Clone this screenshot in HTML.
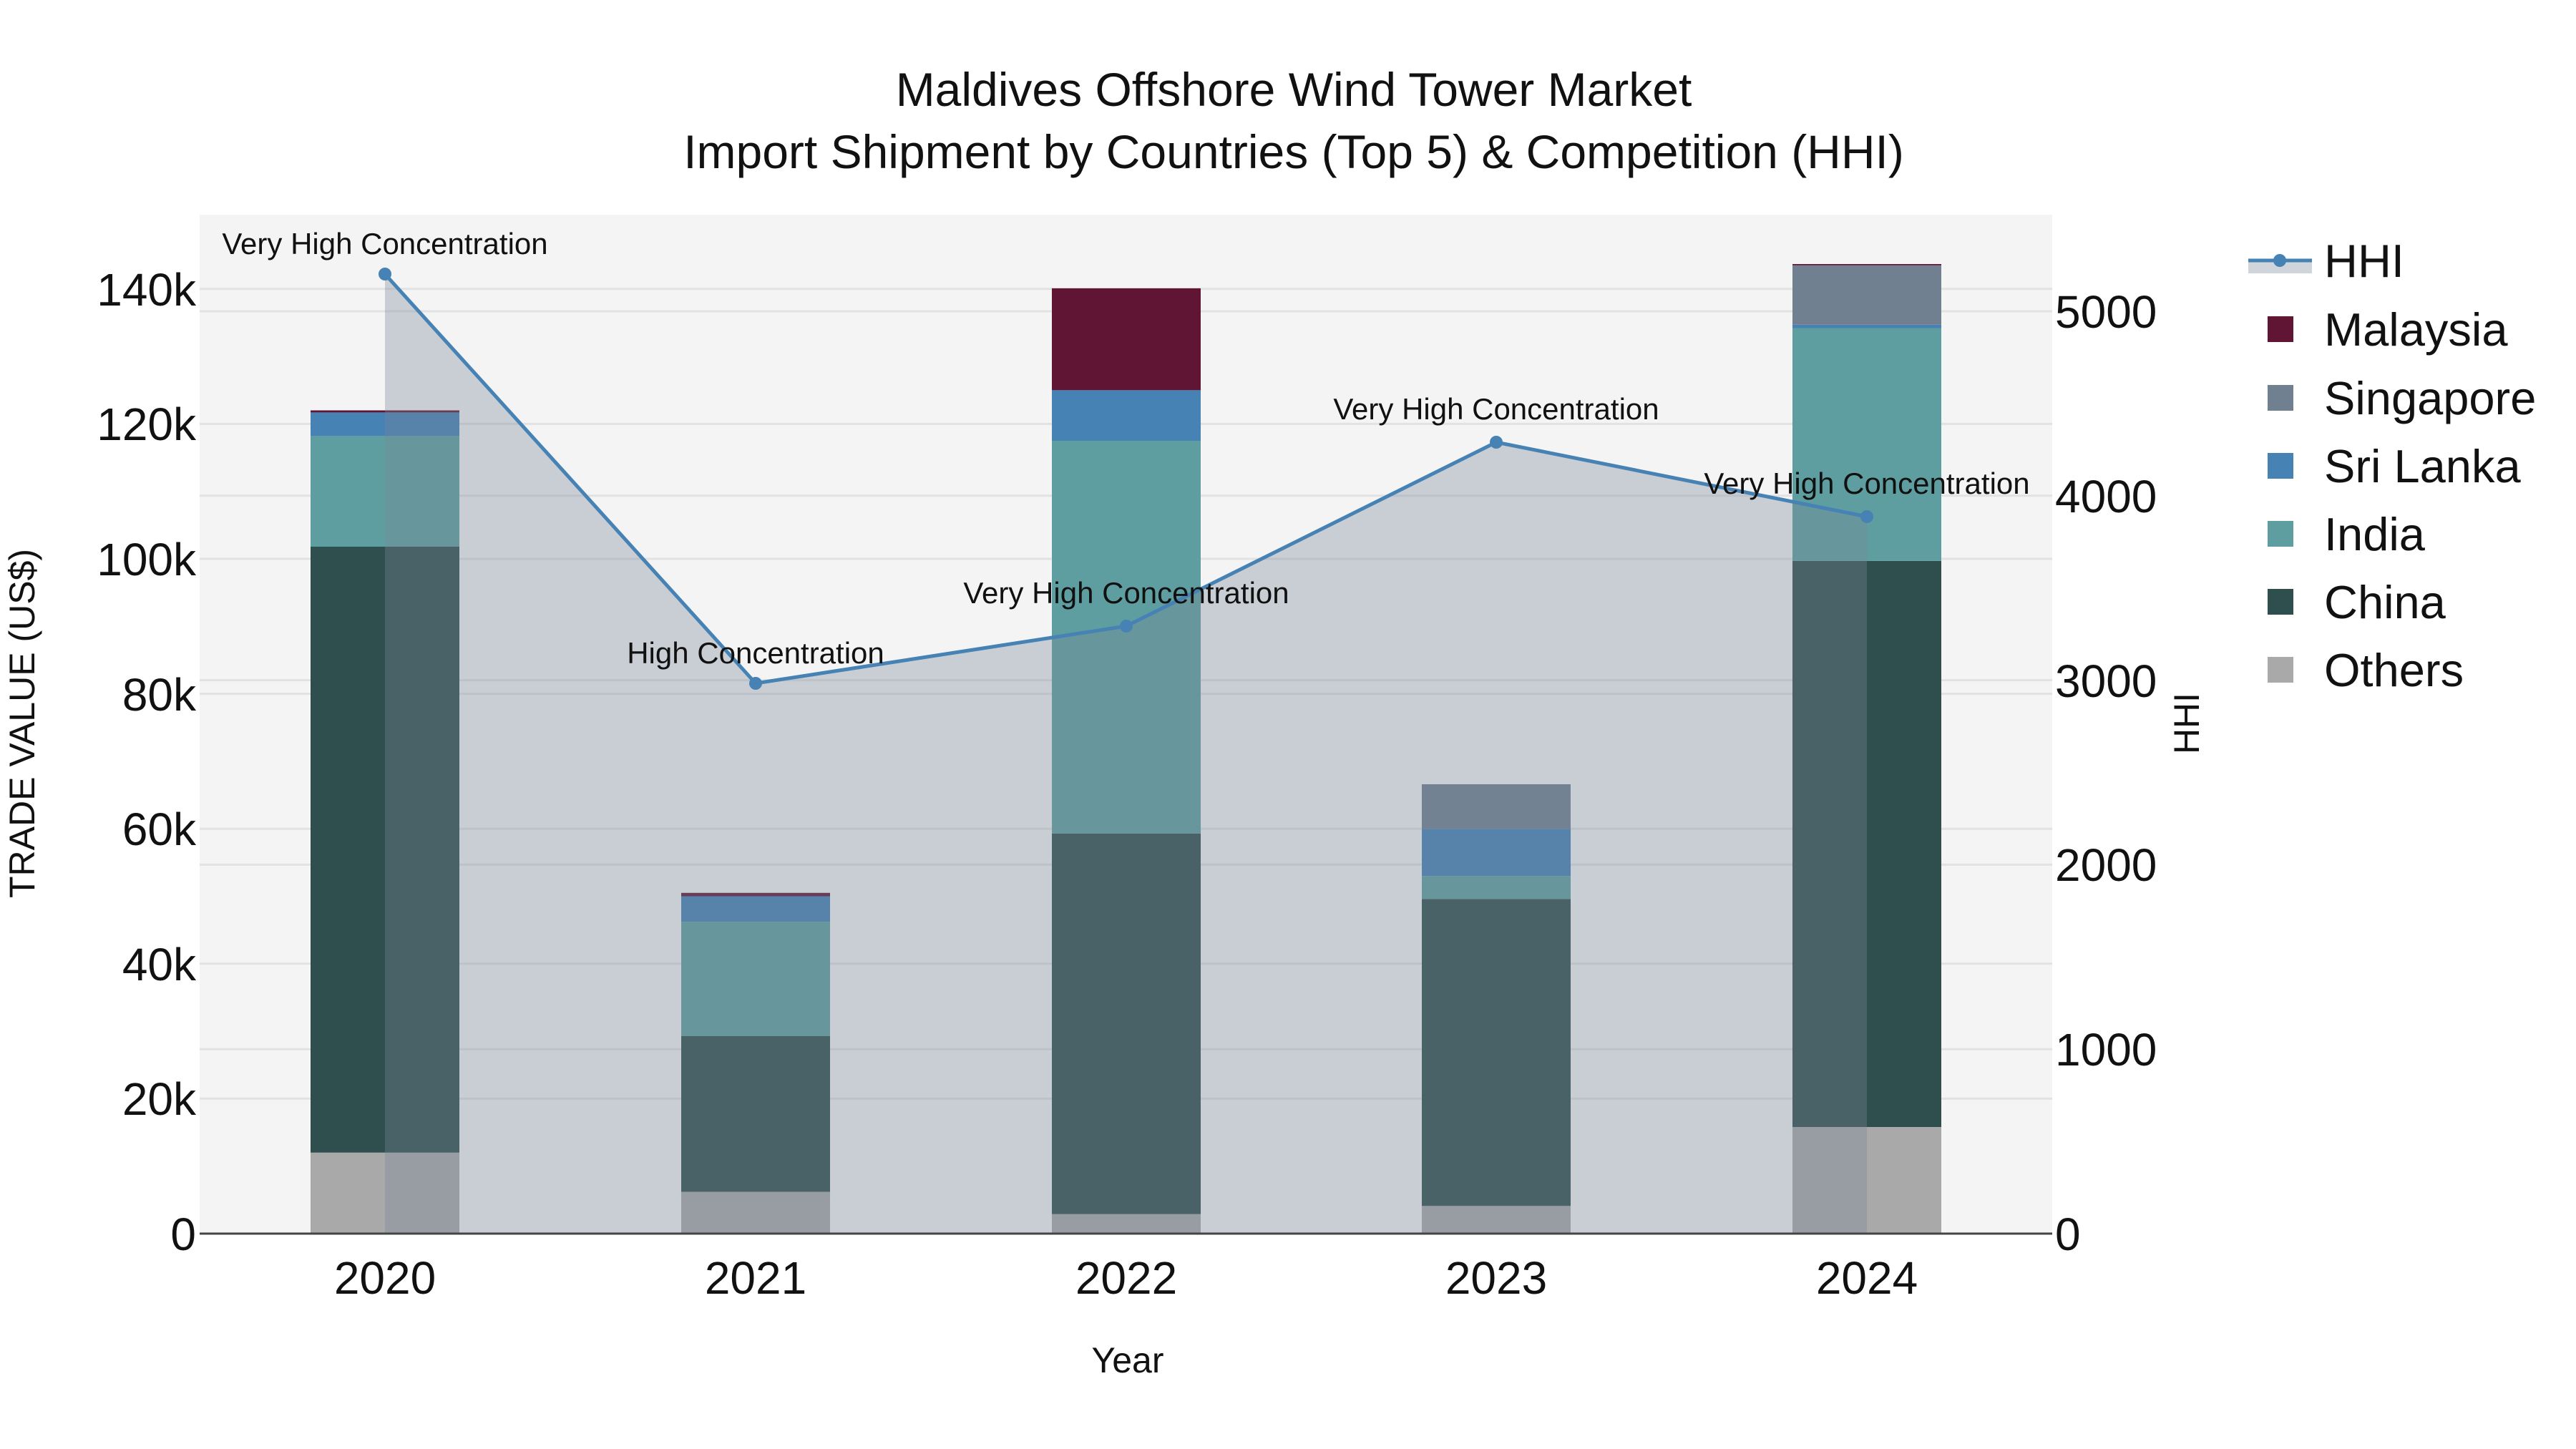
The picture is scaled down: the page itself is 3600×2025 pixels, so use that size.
<!DOCTYPE html>
<html><head><meta charset="utf-8"><style>html,body{margin:0;padding:0;background:#fff}svg{display:block}text{font-family:"Liberation Sans",sans-serif;fill:#111}</style></head>
<body>
<svg width="3600" height="2025" viewBox="0 0 3600 2025" xmlns="http://www.w3.org/2000/svg">
<rect x="0" y="0" width="3600" height="2025" fill="#fff"/>
<rect x="279" y="300" width="2589" height="1424" fill="#f4f4f4"/>
<g stroke="#e2e2e2" stroke-width="3">
<line x1="279" x2="2868" y1="1535.4" y2="1535.4"/><line x1="279" x2="2868" y1="1346.8" y2="1346.8"/><line x1="279" x2="2868" y1="1158.2" y2="1158.2"/><line x1="279" x2="2868" y1="969.6" y2="969.6"/><line x1="279" x2="2868" y1="781" y2="781"/><line x1="279" x2="2868" y1="592.4" y2="592.4"/><line x1="279" x2="2868" y1="403.8" y2="403.8"/>
<line x1="279" x2="2868" y1="1466.2" y2="1466.2"/><line x1="279" x2="2868" y1="1208.4" y2="1208.4"/><line x1="279" x2="2868" y1="950.6" y2="950.6"/><line x1="279" x2="2868" y1="692.8" y2="692.8"/><line x1="279" x2="2868" y1="435" y2="435"/>
</g>
<g>
<rect x="434" width="208" y="1610.8" height="113.2" fill="#a9a9a9"/>
<rect x="434" width="208" y="764" height="846.8" fill="#2f4f4f"/>
<rect x="434" width="208" y="609.4" height="154.6" fill="#5f9ea0"/>
<rect x="434" width="208" y="576.4" height="33" fill="#4682b4"/>
<rect x="434" width="208" y="573.5" height="2.9" fill="#611535"/>

<rect x="952" width="208" y="1665.5" height="58.5" fill="#a9a9a9"/>
<rect x="952" width="208" y="1447.7" height="217.8" fill="#2f4f4f"/>
<rect x="952" width="208" y="1288.3" height="159.4" fill="#5f9ea0"/>
<rect x="952" width="208" y="1252.5" height="35.8" fill="#4682b4"/>
<rect x="952" width="208" y="1247.8" height="4.7" fill="#611535"/>

<rect x="1470" width="208" y="1696.7" height="27.3" fill="#a9a9a9"/>
<rect x="1470" width="208" y="1164.8" height="531.9" fill="#2f4f4f"/>
<rect x="1470" width="208" y="616" height="548.8" fill="#5f9ea0"/>
<rect x="1470" width="208" y="545.3" height="70.7" fill="#4682b4"/>
<rect x="1470" width="208" y="402.9" height="142.4" fill="#611535"/>

<rect x="1987" width="208" y="1685.3" height="38.7" fill="#a9a9a9"/>
<rect x="1987" width="208" y="1256.3" height="429" fill="#2f4f4f"/>
<rect x="1987" width="208" y="1224.2" height="32.1" fill="#5f9ea0"/>
<rect x="1987" width="208" y="1158.2" height="66" fill="#4682b4"/>
<rect x="1987" width="208" y="1096" height="62.2" fill="#708090"/>

<rect x="2505" width="208" y="1575" height="149" fill="#a9a9a9"/>
<rect x="2505" width="208" y="783.8" height="791.2" fill="#2f4f4f"/>
<rect x="2505" width="208" y="458.5" height="325.3" fill="#5f9ea0"/>
<rect x="2505" width="208" y="453.8" height="4.7" fill="#4682b4"/>
<rect x="2505" width="208" y="370.8" height="83" fill="#708090"/>
<rect x="2505" width="208" y="369" height="1.8" fill="#611535"/>
</g>
<polygon points="538,1724 538,383 1056,955 1574,875 2091,618 2609,722 2609,1724" fill="rgb(119,136,153)" fill-opacity="0.35"/>
<line x1="279" x2="2868" y1="1724" y2="1724" stroke="#444" stroke-width="3"/>
<polyline points="538,383 1056,955 1574,875 2091,618 2609,722" fill="none" stroke="#4682b4" stroke-width="5"/>
<g fill="#4682b4"><circle cx="538" cy="383" r="9"/><circle cx="1056" cy="955" r="9"/><circle cx="1574" cy="875" r="9"/><circle cx="2091" cy="618" r="9"/><circle cx="2609" cy="722" r="9"/></g>
<g font-size="42" text-anchor="middle">
<text x="538" y="355">Very High Concentration</text>
<text x="1056" y="927">High Concentration</text>
<text x="1574" y="843">Very High Concentration</text>
<text x="2091" y="586">Very High Concentration</text>
<text x="2609" y="690">Very High Concentration</text>
</g>
<g font-size="66" text-anchor="middle">
<text x="1808" y="148">Maldives Offshore Wind Tower Market</text>
<text x="1808" y="235">Import Shipment by Countries (Top 5) &amp; Competition (HHI)</text>
</g>
<g font-size="64" text-anchor="end">
<text x="274" y="1747">0</text>
<text x="274" y="1558">20k</text>
<text x="274" y="1370">40k</text>
<text x="274" y="1181">60k</text>
<text x="274" y="993">80k</text>
<text x="274" y="804">100k</text>
<text x="274" y="615">120k</text>
<text x="274" y="427">140k</text>
</g>
<g font-size="64" text-anchor="start">
<text x="2872" y="1747">0</text>
<text x="2872" y="1489">1000</text>
<text x="2872" y="1231">2000</text>
<text x="2872" y="974">3000</text>
<text x="2872" y="716">4000</text>
<text x="2872" y="458">5000</text>
</g>
<g font-size="64" text-anchor="middle">
<text x="538" y="1808">2020</text><text x="1056" y="1808">2021</text><text x="1574" y="1808">2022</text><text x="2091" y="1808">2023</text><text x="2609" y="1808">2024</text>
</g>
<text x="1576" y="1918" font-size="50" text-anchor="middle">Year</text>
<text transform="translate(48,1011) rotate(-90)" font-size="50" text-anchor="middle">TRADE VALUE (US$)</text>
<text transform="translate(3073,1011) rotate(-90)" font-size="50" text-anchor="middle">HHI</text>
<rect x="3142" y="366" width="89" height="16" fill="rgb(119,136,153)" fill-opacity="0.35"/>
<line x1="3142" x2="3231" y1="364" y2="364" stroke="#4682b4" stroke-width="5"/>
<circle cx="3186" cy="364" r="9" fill="#4682b4"/>
<rect x="3169" y="442" width="36" height="36" fill="#611535"/>
<rect x="3169" y="538" width="36" height="36" fill="#708090"/>
<rect x="3169" y="633" width="36" height="36" fill="#4682b4"/>
<rect x="3169" y="728" width="36" height="36" fill="#5f9ea0"/>
<rect x="3169" y="823" width="36" height="36" fill="#2f4f4f"/>
<rect x="3169" y="918" width="36" height="36" fill="#a9a9a9"/>
<g font-size="65">
<text x="3248" y="387">HHI</text>
<text x="3248" y="483">Malaysia</text>
<text x="3248" y="579">Singapore</text>
<text x="3248" y="674">Sri Lanka</text>
<text x="3248" y="769">India</text>
<text x="3248" y="864">China</text>
<text x="3248" y="959">Others</text>
</g>
</svg>
</body></html>
